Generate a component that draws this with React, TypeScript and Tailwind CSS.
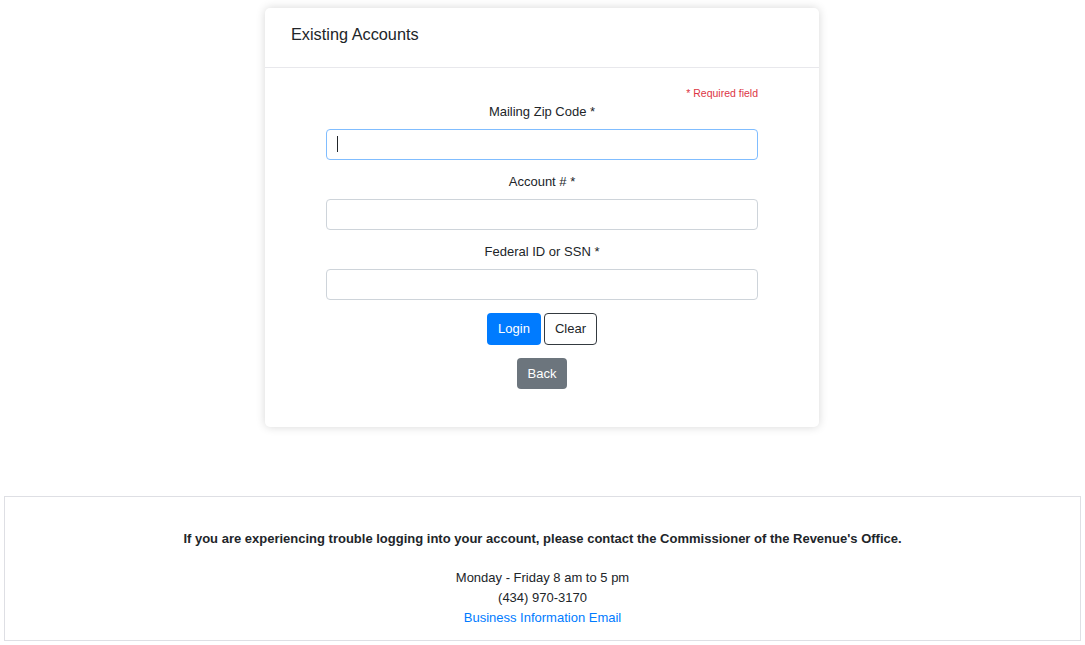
import React from 'react';

const fields = [
  { label: 'Mailing Zip Code *', focused: true },
  { label: 'Account # *', focused: false },
  { label: 'Federal ID or SSN *', focused: false },
];

export default function App() {
  return (
    <div className="min-h-screen bg-white text-[#212529] font-['Liberation_Sans',Arial,sans-serif] pt-[8px]">
      {/* Login card */}
      <div className="ml-[265px] w-[554px] bg-white rounded-[5px] shadow-[0_0_10px_rgba(0,0,0,0.16)]">
        <div className="h-[60px] border-b border-[#e8e8ec] px-[26px] pt-[16px]">
          <h2 className="text-[16.3px] leading-[20px]">Existing Accounts</h2>
        </div>

        <div className="px-[61px] pt-[18px] pb-[38px]">
          <p className="text-right text-[10.5px] leading-[15px] text-[#dc3545]">* Required field</p>

          {fields.map((f, i) => (
            <div key={f.label} className={i === 0 ? 'pt-px' : 'mt-[11px] pt-px'}>
              <label className="block text-center text-[13px] leading-[20px] mb-[7px]">{f.label}</label>
              <div className="relative">
                <input
                  type="text"
                  className={`block w-full h-[31px] rounded-[4px] border bg-white px-3 text-[13px] outline-none ${
                    f.focused ? 'border-[#80bdff]' : 'border-[#ced4da]'
                  }`}
                />
                {f.focused && (
                  <span className="absolute left-[11px] top-[7px] w-px h-[16px] bg-[#212529]"></span>
                )}
              </div>
            </div>
          ))}

          <div className="flex justify-center gap-[3px] mt-[13px]">
            <button className="h-[32px] w-[54px] rounded-[4px] bg-[#007bff] text-white text-[13px] font-medium">Login</button>
            <button className="h-[32px] w-[53px] rounded-[4px] border border-[#343a40] bg-white text-[#212529] text-[13px]">
              Clear
            </button>
          </div>
          <div className="flex justify-center mt-[13px]">
            <button className="h-[31px] w-[50px] rounded-[4px] bg-[#6c757d] text-white text-[13px] font-medium">Back</button>
          </div>
        </div>
      </div>

      {/* Help footer */}
      <div className="mx-[4px] mt-[69px] border border-[#dedfe4] pt-[32px] pb-[12px] text-center text-[13px] leading-[20px]">
        <p className="font-bold">
          If you are experiencing trouble logging into your account, please contact the Commissioner of the Revenue's Office.
        </p>
        <p className="mt-[19px]">Monday - Friday 8 am to 5 pm</p>
        <p>(434) 970-3170</p>
        <a href="#" className="text-[#007bff]">Business Information Email</a>
      </div>
    </div>
  );
}
